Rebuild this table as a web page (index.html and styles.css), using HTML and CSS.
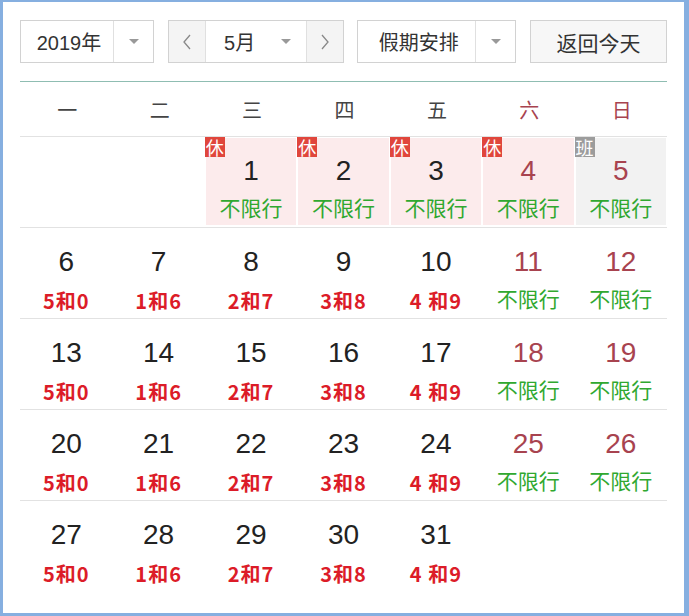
FILE: index.html
```html
<!DOCTYPE html>
<html lang="zh-CN">
<head>
<meta charset="utf-8">
<title>万年历</title>
<link rel="stylesheet" href="styles.css">
</head>
<body>
<div class="frame">
  <div class="controls">
    <div class="select year">
      <span class="select-text">2019年</span>
      <span class="select-arrow"><i class="tri"></i></span>
    </div>
    <div class="month-group">
      <span class="nav"><svg width="10" height="16" viewBox="0 0 10 16"><polyline points="8,1 2,8 8,15" fill="none" stroke="#888" stroke-width="1.3"/></svg></span>
      <span class="month-text">5月</span>
      <span class="month-arrow"><i class="tri"></i></span>
      <span class="nav"><svg width="10" height="16" viewBox="0 0 10 16"><polyline points="2,1 8,8 2,15" fill="none" stroke="#888" stroke-width="1.3"/></svg></span>
    </div>
    <div class="select holiday">
      <span class="select-text">假期安排</span>
      <span class="select-arrow"><i class="tri"></i></span>
    </div>
    <div class="today-btn">返回今天</div>
  </div>
  <div class="rule"></div>
  <div class="weekdays">
    <span>一</span><span>二</span><span>三</span><span>四</span><span>五</span><span class="wkend">六</span><span class="wkend">日</span>
  </div>
  <div class="week">
    <div class="cell"></div>
    <div class="cell"></div>
    <div class="cell rest"><span class="badge">休</span><span class="num">1</span><span class="lbl green">不限行</span></div>
    <div class="cell rest"><span class="badge">休</span><span class="num">2</span><span class="lbl green">不限行</span></div>
    <div class="cell rest"><span class="badge">休</span><span class="num">3</span><span class="lbl green">不限行</span></div>
    <div class="cell rest"><span class="badge">休</span><span class="num wkend">4</span><span class="lbl green">不限行</span></div>
    <div class="cell work"><span class="badge grey">班</span><span class="num wkend">5</span><span class="lbl green">不限行</span></div>
  </div>
  <div class="week">
    <div class="cell"><span class="num">6</span><span class="lbl red">5和0</span></div>
    <div class="cell"><span class="num">7</span><span class="lbl red">1和6</span></div>
    <div class="cell"><span class="num">8</span><span class="lbl red">2和7</span></div>
    <div class="cell"><span class="num">9</span><span class="lbl red">3和8</span></div>
    <div class="cell"><span class="num">10</span><span class="lbl red">4 和9</span></div>
    <div class="cell"><span class="num wkend">11</span><span class="lbl green">不限行</span></div>
    <div class="cell"><span class="num wkend">12</span><span class="lbl green">不限行</span></div>
  </div>
  <div class="week">
    <div class="cell"><span class="num">13</span><span class="lbl red">5和0</span></div>
    <div class="cell"><span class="num">14</span><span class="lbl red">1和6</span></div>
    <div class="cell"><span class="num">15</span><span class="lbl red">2和7</span></div>
    <div class="cell"><span class="num">16</span><span class="lbl red">3和8</span></div>
    <div class="cell"><span class="num">17</span><span class="lbl red">4 和9</span></div>
    <div class="cell"><span class="num wkend">18</span><span class="lbl green">不限行</span></div>
    <div class="cell"><span class="num wkend">19</span><span class="lbl green">不限行</span></div>
  </div>
  <div class="week">
    <div class="cell"><span class="num">20</span><span class="lbl red">5和0</span></div>
    <div class="cell"><span class="num">21</span><span class="lbl red">1和6</span></div>
    <div class="cell"><span class="num">22</span><span class="lbl red">2和7</span></div>
    <div class="cell"><span class="num">23</span><span class="lbl red">3和8</span></div>
    <div class="cell"><span class="num">24</span><span class="lbl red">4 和9</span></div>
    <div class="cell"><span class="num wkend">25</span><span class="lbl green">不限行</span></div>
    <div class="cell"><span class="num wkend">26</span><span class="lbl green">不限行</span></div>
  </div>
  <div class="week last">
    <div class="cell"><span class="num">27</span><span class="lbl red">5和0</span></div>
    <div class="cell"><span class="num">28</span><span class="lbl red">1和6</span></div>
    <div class="cell"><span class="num">29</span><span class="lbl red">2和7</span></div>
    <div class="cell"><span class="num">30</span><span class="lbl red">3和8</span></div>
    <div class="cell"><span class="num">31</span><span class="lbl red">4 和9</span></div>
    <div class="cell"></div>
    <div class="cell"></div>
  </div>
</div>
</body>
</html>
```
FILE: styles.css
```css
html, body {
  margin: 0;
  padding: 0;
  background: #fff;
}
.frame {
  width: 689px;
  height: 616px;
  box-sizing: border-box;
  border-style: solid;
  border-color: #86afe0;
  border-width: 2px 5px 3px 3px;
  padding: 18px 17px 0 17px;
  background: #fff;
  font-family: "Liberation Sans", "Noto Sans CJK SC", sans-serif;
  color: #333;
  overflow: hidden;
}
.controls {
  display: flex;
  justify-content: space-between;
  height: 43px;
}
.select, .month-group, .today-btn {
  box-sizing: border-box;
  height: 43px;
  border: 1px solid #d2d2d2;
  display: flex;
  align-items: stretch;
  font-family: "Liberation Sans", "Noto Sans CJK SC", sans-serif;
  font-size: 20px;
  color: #333;
}
.year { width: 134px; }
.holiday { width: 159px; }
.select-text {
  flex: 1;
  display: flex;
  align-items: center;
  justify-content: center;
  padding-left: 4px;
  border-right: 1px solid #e0e0e0;
}
.select-arrow {
  width: 39px;
  display: flex;
  align-items: center;
  justify-content: center;
}
.tri {
  display: block;
  width: 0;
  height: 0;
  border-left: 5px solid transparent;
  border-right: 5px solid transparent;
  border-top: 5px solid #999;
}
.month-group { width: 176px; }
.nav {
  width: 36px;
  display: flex;
  align-items: center;
  justify-content: center;
  background: #f4f4f4;
}
.nav:first-child { border-right: 1px solid #e0e0e0; }
.nav:last-child { border-left: 1px solid #e0e0e0; }
.month-text {
  flex: 1;
  display: flex;
  align-items: center;
  justify-content: center;
  padding-left: 8px;
}
.month-arrow {
  width: 40px;
  display: flex;
  align-items: center;
  justify-content: center;
}
.today-btn {
  width: 137px;
  align-items: center;
  justify-content: center;
  background: #f7f7f7;
  font-size: 21px;
}
.rule {
  margin-top: 18px;
  height: 1px;
  background: #8fbdb2;
}
.weekdays {
  display: grid;
  grid-template-columns: repeat(7, 1fr);
  height: 54px;
  border-bottom: 1px solid #e2e2e2;
  font-family: "Noto Sans CJK SC", sans-serif;
  font-size: 20px;
  color: #444;
}
.weekdays span {
  display: flex;
  align-items: center;
  justify-content: center;
  padding-left: 2px;
}
.weekdays .wkend { color: #a8434f; }
.week {
  display: grid;
  grid-template-columns: repeat(7, 1fr);
  height: 91px;
  box-sizing: border-box;
  border-bottom: 1px solid #e2e2e2;
}
.week.last { border-bottom: none; }
.cell {
  position: relative;
  display: flex;
  flex-direction: column;
  align-items: center;
  padding-top: 17px;
  border: 1px solid transparent;
  border-bottom-width: 2px;
  background-clip: padding-box;
}
.cell.rest { background-color: #fcebec; }
.cell.work { background-color: #f2f2f2; }
.badge {
  position: absolute;
  left: -1px;
  top: -1px;
  width: 20px;
  height: 20px;
  background: #e0463c;
  color: #fff;
  font-family: "Noto Sans CJK SC", sans-serif;
  font-size: 18px;
  line-height: 20px;
  text-align: center;
}
.badge.grey { background: #9c9c9c; }
.num {
  font-family: "Liberation Sans", sans-serif;
  font-size: 28px;
  line-height: 32px;
  color: #222;
}
.num.wkend { color: #a8434f; }
.lbl {
  margin-top: 8px;
  font-family: "Noto Sans CJK SC", sans-serif;
  line-height: 24px;
  white-space: pre;
}
.lbl.green {
  color: #30a830;
  font-size: 21px;
}
.lbl.red {
  margin-top: 11px;
  color: #dc1c28;
  font-size: 20px;
  font-weight: bold;
  letter-spacing: 1px;
}
```
